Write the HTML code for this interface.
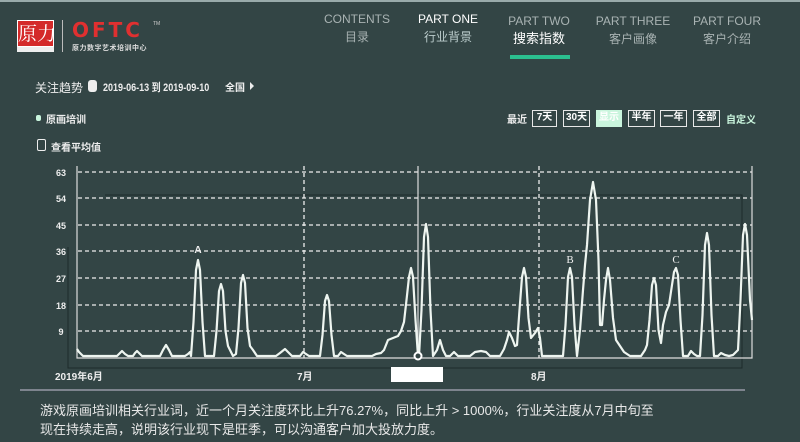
<!DOCTYPE html>
<html><head><meta charset="utf-8"><style>
*{margin:0;padding:0;box-sizing:border-box}
body{width:800px;height:442px;background:#334545;overflow:hidden;position:relative;font-family:"Liberation Sans","Noto Sans CJK SC",sans-serif;color:#fff}
.a{position:absolute;white-space:nowrap}
.nav{position:absolute;top:10px;text-align:center;width:90px;font-size:12px;line-height:18px;color:#a9b3b3}
.btn{position:absolute;top:110px;height:17px;border:1.5px solid #e8e8e8;font-size:10px;line-height:14px;text-align:center;color:#fff;font-weight:bold}
</style></head><body>
<div style="position:absolute;top:0;left:0;width:800px;height:2px;background:#9aa"></div>
<div class="a" style="left:17px;top:20px;width:37px;height:27px;background:#d42a2a;border:1px solid #fff;font-family:'Noto Serif CJK SC',serif;font-size:19px;line-height:24px;color:#fff;text-align:center">原力</div>
<div class="a" style="left:17px;top:47px;width:37px;height:5px;background:#eee"></div>
<div class="a" style="left:62px;top:20px;width:1px;height:32px;background:#bbb"></div>
<div class="a" style="left:72px;top:19px;font-size:20px;font-weight:bold;color:#e03030;letter-spacing:3px;line-height:22px;font-family:'DejaVu Sans',sans-serif">OFTC</div>
<div class="a" style="left:153px;top:21px;font-size:5px;color:#ccc">TM</div>
<div class="a" style="left:72px;top:43px;font-size:7px;color:#ddd;font-weight:bold;letter-spacing:0.5px">原力数字艺术培训中心</div>
<div class="nav" style="left:312px">CONTENTS<br>目录</div>
<div class="nav" style="left:403px;color:#fff">PART ONE<br><span style="color:#bcc">行业背景</span></div>
<div class="nav" style="left:494px;top:12px">PART TWO<br><span style="color:#fff;font-size:13px">搜索指数</span></div>
<div class="nav" style="left:588px;top:12px">PART THREE<br>客户画像</div>
<div class="nav" style="left:682px;top:12px">PART FOUR<br>客户介绍</div>
<div class="a" style="left:510px;top:55px;width:60px;height:4px;background:#2bbf8f"></div>
<div class="a" style="left:35px;top:79px;font-size:12px;color:#eee">关注趋势</div>
<div class="a" style="left:88px;top:80px;width:9px;height:12px;background:#eee;border-radius:3px"></div>
<div class="a" style="left:103px;top:79px;font-size:11px;color:#eee;font-weight:bold;transform:scaleX(0.82);transform-origin:0 0">2019-06-13 到 2019-09-10</div>
<div class="a" style="left:225px;top:79px;font-size:10px;font-weight:bold;color:#eee">全国</div>
<div class="a" style="left:250px;top:82px;width:0;height:0;border-left:4px solid #eee;border-top:4px solid transparent;border-bottom:4px solid transparent"></div>
<div class="a" style="left:36px;top:115px;width:5px;height:6px;background:#c9f5dd;border-radius:2px"></div>
<div class="a" style="left:46px;top:111px;font-size:10px;font-weight:bold;color:#eee">原画培训</div>
<div class="a" style="left:37px;top:139px;width:9px;height:12px;border:1.5px solid #eee;border-radius:2px"></div>
<div class="a" style="left:51px;top:139px;font-size:10px;font-weight:bold;color:#eee">查看平均值</div>
<div class="a" style="left:507px;top:111px;font-size:10px;font-weight:bold;color:#eee">最近</div>
<div class="btn" style="left:532px;width:25px">7天</div>
<div class="btn" style="left:563px;width:27px">30天</div>
<div class="btn" style="left:596px;width:26px;background:#c9f5dd;border-color:#c9f5dd">显示</div>
<div class="btn" style="left:628px;width:27px">半年</div>
<div class="btn" style="left:660px;width:27px">一年</div>
<div class="btn" style="left:693px;width:27px">全部</div>
<div class="a" style="left:726px;top:111px;font-size:10px;font-weight:bold;color:#c9f5dd">自定义</div>
<svg class="a" style="left:0;top:0" width="800" height="442">
<g stroke="#1e2a2a" stroke-width="1" fill="none"><path d="M105 195H742V368H68V247"/></g>
<g stroke="#eee" stroke-width="1.3" stroke-dasharray="4,3" fill="none">
<path d="M78 172H752M78 198H752M78 225H752M78 251H752M78 278H752M78 305H752M78 331H752"/>
<path d="M304 166V358M539 166V358"/>
</g>
<path d="M77 166V358H752V166M418 166V358" stroke="#ddd" stroke-width="1.2" fill="none"/>
<g font-size="9" font-weight="bold" fill="#eee" font-family="Liberation Sans,sans-serif" text-anchor="middle">
<text x="61" y="176">63</text><text x="61" y="202">54</text><text x="61" y="229">45</text><text x="61" y="255">36</text><text x="61" y="282">27</text><text x="61" y="309">18</text><text x="61" y="335">9</text>
<text x="198" y="253" font-size="10">A</text><text x="570" y="263" font-family="Liberation Serif,serif" font-size="11" font-weight="normal">B</text><text x="676" y="263" font-family="Liberation Serif,serif" font-size="11" font-weight="normal">C</text>
</g>
<polyline fill="none" stroke="#eef5f0" stroke-width="2.2" stroke-linejoin="round" points="77,349 79,352 83,356 117,356 119,354 122,351 125,354 128,356 133,356 135,353 137,351 140,354 142,356 160,356 163,350 166,345 169,350 172,356 185,356 188,354 190,352 191,356 193.5,322 196,270 198,260 200,270 202.5,322 205,356 214,356 216.5,331 219,291 221,284 223,291 225.5,331 228,346 230,350 233,356 236,354 238.5,328 241,283 243,275 245,283 247.5,328 250,346 253,350 257,356 276,356 280,353 285,349 289,353 292,356 300,356 303,352 306,354 309,356 320,356 322.5,335 325,301 327,295 329,301 331.5,335 334,356 338,356 341,352 344,354 347,356 372,356 376,354 381,353 384,350 388,340 393,338 398,336 401,331 404,322 406.5,300 409,277 411,268 413,277 415.5,320 418,356 419,356 421.5,310 424,237 426,224 428,237 430.5,310 433,356 437,350 440,340 443,350 446,356 450,356 454,352 458,356 470,356 475,352 481,351 486,352 490,356 500,356 504,349 507,340 509,332 512,338 515,346 517,345 519.5,310 522,277 524,268 526,277 528.5,318 531,338 535,333 538,328 540,338 542,356 563,356 565.5,325 568,277 570,268 572,277 574.5,325 577,356 580,330 583,290 585,265 587,245 590,200 593,182 596,200 598.5,260 600,325 602,325 604,300 606,280 608,268 610,280 613,318 616,340 620,346 624,352 630,356 641,356 645,350 647,345 649.5,320 652,285 654,278 656,285 658.5,330 661,343 663,325 666,312 669,305 672,285 674,272 676,268 678,275 680.5,320 683,356 688,356 691,351 694,354 697,356 700,356 702.5,315 705,245 707,233 709,245 711.5,315 714,356 718,356 721,353 725,355 729,356 733,355 736,352 738,350 740.5,300 743,235 745,224 747,235 750,300 752,320"/>
<circle cx="418" cy="356" r="3.5" fill="#334545" stroke="#fff" stroke-width="2"/>
<rect x="391" y="367" width="52" height="15" fill="#fff"/>
<g font-size="10" font-weight="bold" fill="#eee"><text x="55" y="380">2019年6月</text><text x="297" y="380">7月</text><text x="531" y="380">8月</text></g>
<path d="M20 390H745" stroke="#aab" stroke-width="1.2"/>
</svg>
<div class="a" style="left:40px;top:401px;font-size:13px;line-height:19px;color:#e8e8e8">游戏原画培训相关行业词，近一个月关注度环比上升76.27%，同比上升 &gt; 1000%，行业关注度从7月中旬至<br>现在持续走高，说明该行业现下是旺季，可以沟通客户加大投放力度。</div>
</body></html>
